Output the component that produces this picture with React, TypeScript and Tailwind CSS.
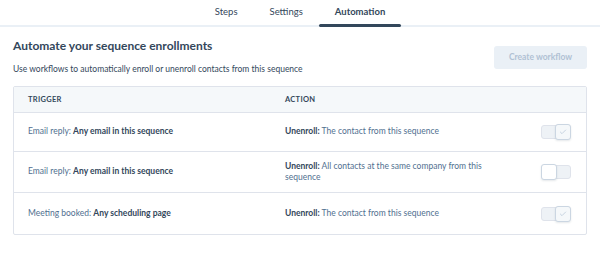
import { Check } from 'lucide-react';

const rows = [
  { label: 'Email reply:', value: 'Any email in this sequence', action: 'The contact from this sequence', on: true, h: 'h-[39px]' },
  { label: 'Email reply:', value: 'Any email in this sequence', action: 'All contacts at the same company from this sequence', on: false, h: 'h-[41px]' },
  { label: 'Meeting booked:', value: 'Any scheduling page', action: 'The contact from this sequence', on: true, h: 'h-[42px]' },
];

function Toggle({ on }: { on: boolean }) {
  return (
    <div className="relative w-[30px] h-[14px] rounded-[3px] bg-[#eef2f6] border border-[#dfe3eb]">
      {on ? (
        <span className="absolute right-[-1px] top-[-2px] w-[16px] h-[16px] rounded-[3px] bg-[#f5f8fa] border border-[#cbd6e2] shadow-[0_1px_2px_rgba(45,62,80,0.12)] flex items-center justify-center">
          <Check size={8} strokeWidth={2} className="text-[#b0c1d4]" />
        </span>
      ) : (
        <span className="absolute left-[-1px] top-[-2px] w-[16px] h-[16px] rounded-[3px] bg-white border border-[#cbd6e2] shadow-[0_1px_2px_rgba(45,62,80,0.12)]" />
      )}
    </div>
  );
}

export default function App() {
  return (
    <div className="w-[600px] h-[259px] bg-white font-['Lato',sans-serif] text-[#33475b]">
      <nav className="flex justify-center border-b-2 border-[#eaf0f6]">
        <button className="h-[25px] px-[16px] text-[9.5px] text-[#33475b]">Steps</button>
        <button className="h-[25px] px-[16px] text-[9.5px] text-[#33475b]">Settings</button>
        <button className="relative h-[25px] px-[16px] text-[9.5px] font-bold text-[#33475b]">
          Automation
          <span className="absolute left-0 right-0 bottom-[-2px] h-[3px] bg-[#33475b] rounded-full" />
        </button>
      </nav>

      <div className="px-[13px] pt-[11px]">
        <div className="flex justify-between">
          <div>
            <h2 className="text-[12px] leading-[16px] font-bold">Automate your sequence enrollments</h2>
            <p className="mt-[9px] text-[8.5px] leading-[12px] text-[#33475b]">
              Use workflows to automatically enroll or unenroll contacts from this sequence
            </p>
          </div>
          <button className="mt-[8px] w-[93px] h-[23px] rounded-[3px] bg-[#eaf0f6] text-[8.5px] font-bold text-[#b0c1d4]">
            Create workflow
          </button>
        </div>

        <div className="mt-[11px] border border-[#dfe3eb] rounded-[2px]">
          <div className="flex items-center h-[25px] bg-[#f5f8fa] text-[7.5px] font-bold tracking-[0.3px] uppercase">
            <div className="w-[271px] pl-[14px]">Trigger</div>
            <div>Action</div>
          </div>
          {rows.map((r, i) => (
            <div key={i} className={`flex items-center border-t border-[#dfe3eb] ${r.h} text-[8.5px] leading-[11.5px]`}>
              <div className="w-[271px] pl-[14px] text-[#516f90]">
                {r.label} <span className="font-bold text-[#33475b]">{r.value}</span>
              </div>
              <div className="w-[215px] text-[#516f90]">
                <span className="font-bold text-[#33475b]">Unenroll:</span> {r.action}
              </div>
              <div className="ml-auto pr-[15px]">
                <Toggle on={r.on} />
              </div>
            </div>
          ))}
        </div>
      </div>
    </div>
  );
}
